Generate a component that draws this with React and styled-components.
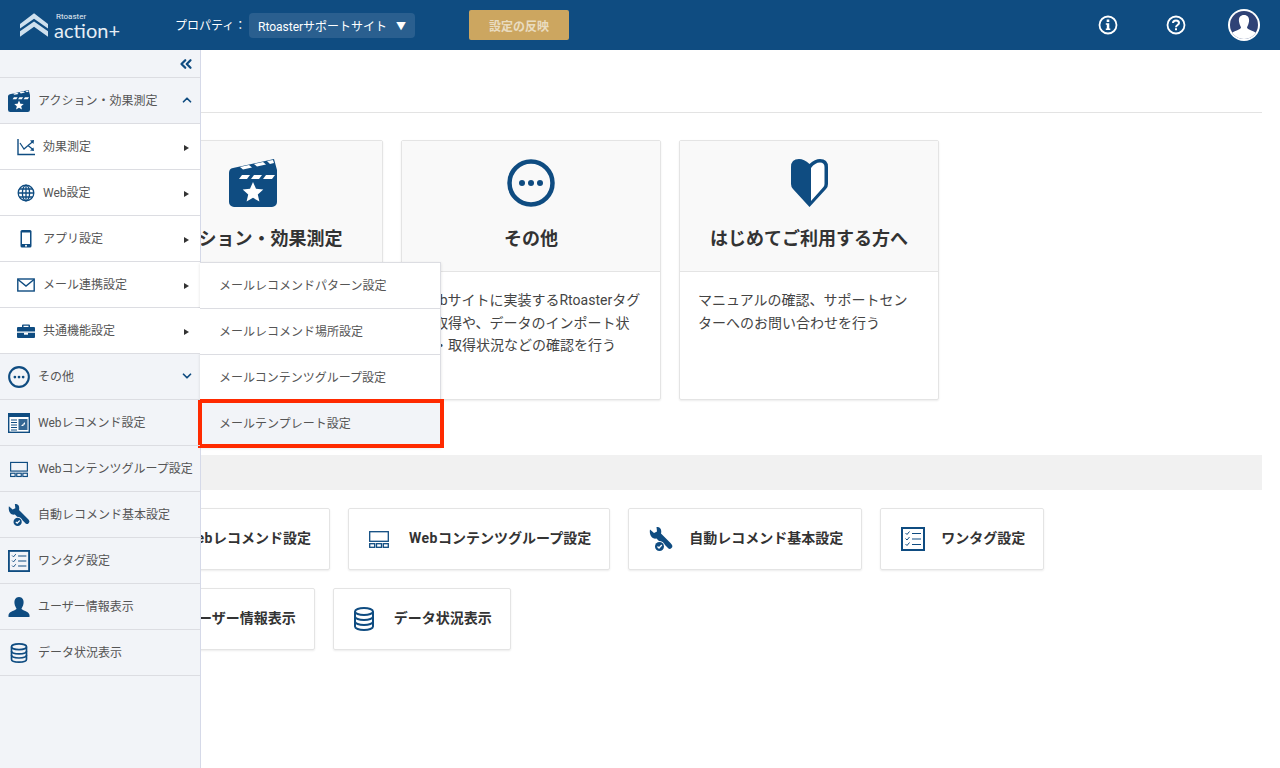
import React from 'react';
import styled, { createGlobalStyle } from 'styled-components';
import { ChevronUp, ChevronDown, ChevronsLeft } from 'lucide-react';

const NAVY = '#0f4c81';

const GlobalStyle = createGlobalStyle`
    html, body {
        margin: 0;
        padding: 0;
        height: 100%;
        overflow: hidden;
        background: #fff;
        font-family: Roboto, "Noto Sans CJK JP", sans-serif;
        color: #333;
    }
    * { box-sizing: border-box; }
`;

// icons
const Clapper = ({ size = 48 }) => (
    <svg width={size} height={size} viewBox="0 0 48 48">
        <path fill={NAVY} d="M4 9 L45 0 L48 11 V43 a5 5 0 0 1-5 5 H5 a5 5 0 0 1-5-5 V14 a5 5 0 0 1 4-5z" />
        <path fill="#fff" d="M11 8 l9-2 3 2.500-9 2zM25 5 l9-2 3 2.500-9 2zM38 2 l6-1 1 3-4 1z" />
        <path fill="#fff" d="M13 16 h8 l-3 4 h-8zM25 16 h8 l-3 4 h-8zM37 16 h9 l-3 4 h-9z" />
        <path fill="#fff" d="M24 23 l3 6.800 7.300.700-5.500 4.900 1.600 7.200-6.400-3.800-6.400 3.800 1.600-7.200-5.500-4.900 7.300-.700z" />
    </svg>
);

const Dots = ({ size = 48 }) => (
    <svg width={size} height={size} viewBox="0 0 48 48">
        <circle cx="24" cy="24" r="21.500" fill="none" stroke={NAVY} strokeWidth="4.500" />
        <circle cx="15" cy="24" r="3" fill={NAVY} />
        <circle cx="24" cy="24" r="3" fill={NAVY} />
        <circle cx="33" cy="24" r="3" fill={NAVY} />
    </svg>
);

const Beginner = () => (
    <svg width="37" height="48" viewBox="0 0 37 48">
        <path fill={NAVY} d="M18.500 48 L2 30 Q0 28 0 25 V8 Q0 0 8 0 Q13 0 18.500 5 Q24 0 29 0 Q37 0 37 8 V25 Q37 28 35 30 Z" />
        <path fill="#fff" d="M20 9 Q24 3.500 29 3.500 Q33.500 3.500 33.500 8 V25 Q33.500 27 32 28.500 L20 42 Z" />
    </svg>
);

const Chart = () => (
    <svg width="18" height="18" viewBox="0 0 18 18" fill="none" stroke={NAVY}>
        <path strokeWidth="1.400" d="M1 1 V16.500 H18" />
        <path strokeWidth="1.200" d="M3 5 L7 11 L11 7.500 L16 11.500 M11 7.500 L16 3.500" />
        <path fill={NAVY} stroke="none" d="M13 2.500 L17 2 L16.500 6zM17 13 L13 12.500 L16.500 9.500z" />
    </svg>
);

const Globe = () => (
    <svg width="18" height="18" viewBox="0 0 18 18" fill="none" stroke={NAVY} strokeWidth="1.300">
        <circle cx="9" cy="9" r="7.800" />
        <ellipse cx="9" cy="9" rx="3.600" ry="7.800" />
        <path d="M9 1 V17 M1 9 H17 M2.200 5 H15.800 M2.200 13 H15.800" />
    </svg>
);

const Phone = () => (
    <svg width="18" height="18" viewBox="0 0 18 18">
        <rect x="3.500" y="0" width="11" height="17.500" rx="1.500" fill={NAVY} />
        <rect x="5" y="2.500" width="8" height="11.500" fill="#fff" />
        <circle cx="9" cy="15.700" r="1" fill="#fff" />
    </svg>
);

const Mail = () => (
    <svg width="18" height="18" viewBox="0 0 18 18" fill="none" stroke={NAVY} strokeWidth="1.400">
        <rect x="0.800" y="3" width="16.400" height="12" />
        <path d="M1 3.500 L9 10 L17 3.500" />
    </svg>
);

const Briefcase = () => (
    <svg width="18" height="18" viewBox="0 0 18 18">
        <path fill={NAVY} d="M6 2.500 h6 a1 1 0 0 1 1 1 V5 h4 a1 1 0 0 1 1 1 v3.500 H0 V6 a1 1 0 0 1 1-1 h4 V3.500 a1 1 0 0 1 1-1z M6.500 3.800 V5 h5 V3.800z" fillRule="evenodd" />
        <path fill={NAVY} d="M0 10.700 H18 V15 a1 1 0 0 1-1 1 H1 a1 1 0 0 1-1-1z" />
        <rect x="7" y="10.700" width="4" height="2" fill="#fff" />
    </svg>
);

const Panels = ({ size = 20 }) => (
    <svg width={size} height={size} viewBox="0 0 20 20" fill="none" stroke={NAVY} strokeWidth="1.300">
        <rect x="0.700" y="2.700" width="18.600" height="9.600" />
        <rect x="0.700" y="14.700" width="5" height="3.600" />
        <rect x="7.500" y="14.700" width="5" height="3.600" />
        <rect x="14.300" y="14.700" width="5" height="3.600" />
    </svg>
);

const WebRecommend = ({ size = 22 }) => (
    <svg width={size} height={size} viewBox="0 0 22 22">
        <rect x="0.700" y="1.700" width="20.600" height="18.600" fill="#fff" stroke={NAVY} strokeWidth="1.400" />
        <rect x="1" y="2" width="20" height="3" fill={NAVY} />
        <path stroke={NAVY} d="M3 8 H9 M3 10.500 H9 M3 13 H9 M3 15.500 H9 M3 18 H9" />
        <rect x="10.500" y="7" width="9" height="11" fill={NAVY} opacity=".85" />
        <path fill="#fff" d="M13 14 l4-4 v2.500 h-1.500 v1.500z" />
    </svg>
);

const Wrench = ({ size = 24 }) => (
    <svg width={size} height={size} viewBox="0 0 24 24">
        <path fill={NAVY} d="M1 2.500 L5 6 L8 4.500 L7.500 0 C11 -.5 13 2.500 12 6.500 L21.500 16 C23.500 18 24 19.500 22.500 21 C21 22.500 19.500 22 18.500 20.500 L16 18 A7 7 0 0 0 10 14 L7.500 11.500 C3 12.500 0 8 1 2.500z" />
        <circle cx="10.500" cy="19.500" r="4.500" fill={NAVY} />
        <path fill="none" stroke="#fff" strokeWidth="1.300" d="M8.500 19.500 L10 21 L12.800 18" />
    </svg>
);

const CheckList = ({ size = 24 }) => (
    <svg width={size} height={size} viewBox="0 0 24 24" fill="none" stroke={NAVY}>
        <rect x="1" y="1" width="22" height="22" strokeWidth="2" />
        <path strokeWidth="1" d="M4.500 6 L6 7.500 L8.500 4.500 M4.500 11.500 L6 13 L8.500 10 M4.500 17 L6 18.500 L8.500 15.500" />
        <path strokeWidth="1.200" d="M11 6.500 H20 M11 12 H20 M11 17.500 H20" />
    </svg>
);

const Person = ({ size = 22 }) => (
    <svg width={size} height={size} viewBox="0 0 22 22">
        <path fill={NAVY} d="M11 1 C14.500 1 16 4 15.500 7.500 C15.200 10 14 11.500 13.500 12.500 C13.500 14.500 21 15 21.500 19 V21 H.500 V19 C1 15 8.500 14.500 8.500 12.500 C8 11.500 6.800 10 6.500 7.500 C6 4 7.500 1 11 1z" />
    </svg>
);

const Cylinders = ({ width = 20, height = 24 }) => (
    <svg width={width} height={height} viewBox="0 0 20 24" fill="none" stroke={NAVY} strokeWidth="2">
        <ellipse cx="10" cy="4.500" rx="9" ry="3.500" />
        <path d="M1 4.500 V19.500 C1 21.500 5 23 10 23 C15 23 19 21.500 19 19.500 V4.500" />
        <path d="M1 9.500 C1 11.500 5 13 10 13 C15 13 19 11.500 19 9.500 M1 14.500 C1 16.500 5 18 10 18 C15 18 19 16.500 19 14.500" />
    </svg>
);

const InfoMark = ({ mark }) => (
    <svg width="20" height="20" viewBox="0 0 20 20">
        <circle cx="10" cy="10" r="8.500" fill="none" stroke="#fff" strokeWidth="1.800" />
        {mark === 'i' ? (
            <path fill="#fff" d="M8.700 4.500 h2.600 v2.400 h-2.600z M7.800 8.200 h3.500 v5.300 h1 v1.500 h-4.500 v-1.500 h1 v-3.800 h-1z" />
        ) : (
            <path fill="none" stroke="#fff" strokeWidth="2" d="M7 8 C7 4.500 13 4.500 13 8 C13 10 10 10 10 12.300 M10 13.300 V15.200" />
        )}
    </svg>
);

const AvatarIcon = () => (
    <svg width="32" height="32" viewBox="0 0 32 32">
        <circle cx="16" cy="16" r="16" fill="#fff" />
        <circle cx="16" cy="16" r="14" fill="#2f4276" />
        <clipPath id="avatarClip"><circle cx="16" cy="16" r="14" /></clipPath>
        <path clipPath="url(#avatarClip)" fill="#fff" d="M16 6 C20 6 21.500 9 21 12.500 C20.700 15 19.500 17 19 18.500 C19.500 21 28 22 30 26 V32 H2 V26 C4 22 12.500 21 13 18.500 C12.500 17 11.300 15 11 12.500 C10.500 9 12 6 16 6z" />
    </svg>
);

// header
const Header = styled.header`
    display: flex;
    align-items: center;
    height: 50px;
    padding: 0 20px;
    background-color: ${NAVY};
    color: #fff;
`;

const Logo = styled.div`
    display: flex;
    align-items: center;
    width: 100px;
    gap: 6px;
`;

const LogoText = styled.div`
    display: flex;
    flex-direction: column;
    color: #e6eef5;
    small {
        font-size: 8px;
        line-height: 9px;
        margin: 0 0 0 2px;
    }
    b {
        font-family: Lato, sans-serif;
        font-weight: 400;
        font-size: 20px;
        line-height: 18px;
        white-space: nowrap;
    }
`;

const PropLabel = styled.span`
    margin: -1px 0 0 55px;
    width: 74px;
    font-size: 12px;
    white-space: nowrap;
`;

const SiteSelect = styled.div`
    display: flex;
    align-items: center;
    justify-content: space-between;
    width: 166px;
    height: 25px;
    padding: 0 9px;
    border-radius: 4px;
    background-color: #2a5f8f;
    font-size: 12px;
    white-space: nowrap;
    span {
        font-size: 10px;
    }
`;

const ApplyButton = styled.div`
    display: flex;
    align-items: center;
    justify-content: center;
    width: 100px;
    height: 30px;
    margin-left: 54px;
    border-radius: 2px;
    background-color: #cca660;
    color: #e9dcc0;
    font-size: 12px;
    font-weight: 700;
`;

const HeaderIcons = styled.div`
    display: flex;
    align-items: center;
    margin-left: auto;
    gap: 48px;
    svg:last-child {
        margin-left: -6px;
    }
`;

// main content
const Main = styled.main`
    padding: 0 18px 0 123px;
`;

const TitleBar = styled.div`
    height: 63px;
    margin-left: -18px;
    border-bottom: 1px solid #e3e3e3;
`;

const CardRow = styled.div`
    display: flex;
    gap: 18px;
    margin-top: 27px;
`;

const Card = styled.section`
    width: 260px;
    height: 260px;
    border: 1px solid #e4e4e4;
    border-radius: 2px;
    box-shadow: 0 1px 2px rgba(0, 0, 0, 0.08);
`;

const CardHead = styled.div`
    display: flex;
    flex-direction: column;
    align-items: center;
    height: 131px;
    padding-top: 18px;
    border-bottom: 1px solid #e4e4e4;
    background-color: #f9f9f9;
    svg {
        display: block;
    }
    h2 {
        margin: 19px 0 0;
        font-size: 18px;
        line-height: 26px;
        font-weight: 700;
        color: #333;
    }
`;

const CardBody = styled.p`
    margin: 0;
    padding: 17px 18px 0 18px;
    font-size: 14px;
    line-height: 22.5px;
    color: #444;
`;

const SectionBar = styled.div`
    height: 35px;
    margin: 55px 0 0 -18px;
    background-color: #f1f1f1;
`;

const LinkRow = styled.div`
    display: flex;
    gap: 18px;
    margin-top: 18px;
`;

const LinkButton = styled.div`
    display: flex;
    align-items: center;
    height: 62px;
    padding: 0 18px 0 20px;
    border: 1px solid #e4e4e4;
    border-radius: 2px;
    box-shadow: 0 1px 2px rgba(0, 0, 0, 0.08);
    font-size: 14px;
    font-weight: 700;
    color: #333;
    white-space: nowrap;
`;

const LinkIcon = styled.span`
    display: flex;
    width: 24px;
    margin-right: 16px;
`;

const LinkLabel = styled.span`
    margin-bottom: 4px;
`;

const Latin = styled.span`
    letter-spacing: 0.5px;
`;

// side menu
const SideMenu = styled.nav`
    position: absolute;
    top: 50px;
    left: 0;
    bottom: 0;
    width: 201px;
    border-right: 1px solid #d5d9e8;
    background-color: #f2f4f8;
    z-index: 2;
`;

const CollapseRow = styled.div`
    display: flex;
    align-items: center;
    justify-content: flex-end;
    height: 28px;
    padding-right: 5px;
    border-bottom: 1px solid #dcdde2;
    color: ${NAVY};
`;

const MenuRow = styled.div`
    position: relative;
    display: flex;
    align-items: center;
    height: 46px;
    padding: ${(p) => (p.$child ? '0 11px 0 17px' : '0 11px 0 8px')};
    border-bottom: 1px solid #dcdde2;
    background-color: ${(p) => (p.$child ? '#fff' : 'transparent')};
    font-size: 12px;
    color: #555;
    white-space: nowrap;
`;

const MenuIcon = styled.span`
    display: flex;
    flex: none;
    justify-content: ${(p) => (p.$center ? 'center' : 'flex-start')};
    width: ${(p) => (p.$child ? '26px' : '30px')};
    padding-right: ${(p) => (p.$center ? '8px' : '0')};
`;

const MenuLabel = styled.span`
    flex: 1;
    margin-top: -3px;
`;

const MenuChevron = styled.span`
    display: flex;
    color: ${NAVY};
    margin-right: -5px;
    margin-top: -1px;
`;

const Pointer = styled.span`
    width: 0;
    height: 0;
    margin-top: 3px;
    border-left: 5px solid #333;
    border-top: 3px solid transparent;
    border-bottom: 3px solid transparent;
`;

const Flyout = styled.div`
    position: absolute;
    top: 0;
    left: 100%;
    width: 241px;
    border: 1px solid #dcdde2;
    border-left: 0;
    border-bottom: 0;
    background-color: #fff;
    box-shadow: 0 1px 3px rgba(0, 0, 0, 0.12);
`;

const FlyoutItem = styled.div`
    position: relative;
    display: flex;
    align-items: center;
    height: 46px;
    padding: 0 0 2px 19px;
    border-bottom: 1px solid #dcdde2;
    background-color: ${(p) => (p.$active ? '#f2f4f8' : '#fff')};
    font-size: 12px;
    color: #555;
    ${(p) => p.$active && `
        &::after {
            content: '';
            position: absolute;
            top: -2px;
            left: -2px;
            right: -4px;
            bottom: -2px;
            border: 4px solid #ff2a00;
        }
    `}
`;

const children = [
    { label: '効果測定', icon: <Chart /> },
    { label: 'Web設定', icon: <Globe /> },
    { label: 'アプリ設定', icon: <Phone /> },
    { label: 'メール連携設定', icon: <Mail />, open: true },
    { label: '共通機能設定', icon: <Briefcase /> },
];

const groups = [
    { label: 'Webレコメンド設定', icon: <WebRecommend /> },
    { label: 'Webコンテンツグループ設定', icon: <Panels size={18} />, center: true },
    { label: '自動レコメンド基本設定', icon: <Wrench size={22} /> },
    { label: 'ワンタグ設定', icon: <CheckList size={22} /> },
    { label: 'ユーザー情報表示', icon: <Person /> },
    { label: 'データ状況表示', icon: <Cylinders width={18} height={20} />, center: true },
];

const mailItems = ['メールレコメンドパターン設定', 'メールレコメンド場所設定', 'メールコンテンツグループ設定', 'メールテンプレート設定'];

function App() {
    return (
        <>
            <GlobalStyle />
            <Header>
                <Logo>
                    <svg width="31" height="26" viewBox="0 0 31 26" fill="#cfe0ee">
                        <path d="M15.500 0 L31 12 V17 L15.500 6 L0 17 V12z" />
                        <path d="M15.500 9 L31 20 V26 L15.500 15 L0 26 V20z" />
                    </svg>
                    <LogoText>
                        <small>Rtoaster</small>
                        <b>action+</b>
                    </LogoText>
                </Logo>
                <PropLabel>プロパティ：</PropLabel>
                <SiteSelect>
                    Rtoasterサポートサイト
                    <span>▼</span>
                </SiteSelect>
                <ApplyButton>設定の反映</ApplyButton>
                <HeaderIcons>
                    <InfoMark mark="i" />
                    <InfoMark mark="?" />
                    <AvatarIcon />
                </HeaderIcons>
            </Header>

            <SideMenu>
                <CollapseRow><ChevronsLeft size={18} strokeWidth={3} /></CollapseRow>
                <MenuRow>
                    <MenuIcon><Clapper size={22} /></MenuIcon>
                    <MenuLabel>アクション・効果測定</MenuLabel>
                    <MenuChevron><ChevronUp size={14} strokeWidth={3} /></MenuChevron>
                </MenuRow>
                {children.map((item) => (
                    <MenuRow $child key={item.label}>
                        <MenuIcon $child>{item.icon}</MenuIcon>
                        <MenuLabel>{item.label}</MenuLabel>
                        <Pointer />
                        {item.open && (
                            <Flyout>
                                {mailItems.map((name, i) => (
                                    <FlyoutItem key={name} $active={i === mailItems.length - 1}>{name}</FlyoutItem>
                                ))}
                            </Flyout>
                        )}
                    </MenuRow>
                ))}
                <MenuRow>
                    <MenuIcon><Dots size={22} /></MenuIcon>
                    <MenuLabel>その他</MenuLabel>
                    <MenuChevron><ChevronDown size={14} strokeWidth={3} /></MenuChevron>
                </MenuRow>
                {groups.map((item) => (
                    <MenuRow key={item.label}>
                        <MenuIcon $center={item.center}>{item.icon}</MenuIcon>
                        <MenuLabel>{item.label}</MenuLabel>
                    </MenuRow>
                ))}
            </SideMenu>

            <Main>
                <TitleBar />
                <CardRow>
                    <Card>
                        <CardHead><Clapper /><h2>アクション・効果測定</h2></CardHead>
                    </Card>
                    <Card>
                        <CardHead><Dots /><h2>その他</h2></CardHead>
                        <CardBody>Webサイトに実装するRtoasterタグの取得や、データのインポート状況・取得状況などの確認を行う</CardBody>
                    </Card>
                    <Card>
                        <CardHead><Beginner /><h2>はじめてご利用する方へ</h2></CardHead>
                        <CardBody>マニュアルの確認、サポートセンターへのお問い合わせを行う</CardBody>
                    </Card>
                </CardRow>
                <SectionBar />
                <LinkRow>
                    <LinkButton><LinkIcon><WebRecommend size={24} /></LinkIcon><LinkLabel><Latin>Web</Latin>レコメンド設定</LinkLabel></LinkButton>
                    <LinkButton><LinkIcon><Panels /></LinkIcon><LinkLabel><Latin>Web</Latin>コンテンツグループ設定</LinkLabel></LinkButton>
                    <LinkButton><LinkIcon><Wrench /></LinkIcon><LinkLabel>自動レコメンド基本設定</LinkLabel></LinkButton>
                    <LinkButton><LinkIcon><CheckList /></LinkIcon><LinkLabel>ワンタグ設定</LinkLabel></LinkButton>
                </LinkRow>
                <LinkRow>
                    <LinkButton><LinkIcon><Person size={24} /></LinkIcon><LinkLabel>ユーザー情報表示</LinkLabel></LinkButton>
                    <LinkButton><LinkIcon><Cylinders /></LinkIcon><LinkLabel>データ状況表示</LinkLabel></LinkButton>
                </LinkRow>
            </Main>
        </>
    );
}

export default App;
